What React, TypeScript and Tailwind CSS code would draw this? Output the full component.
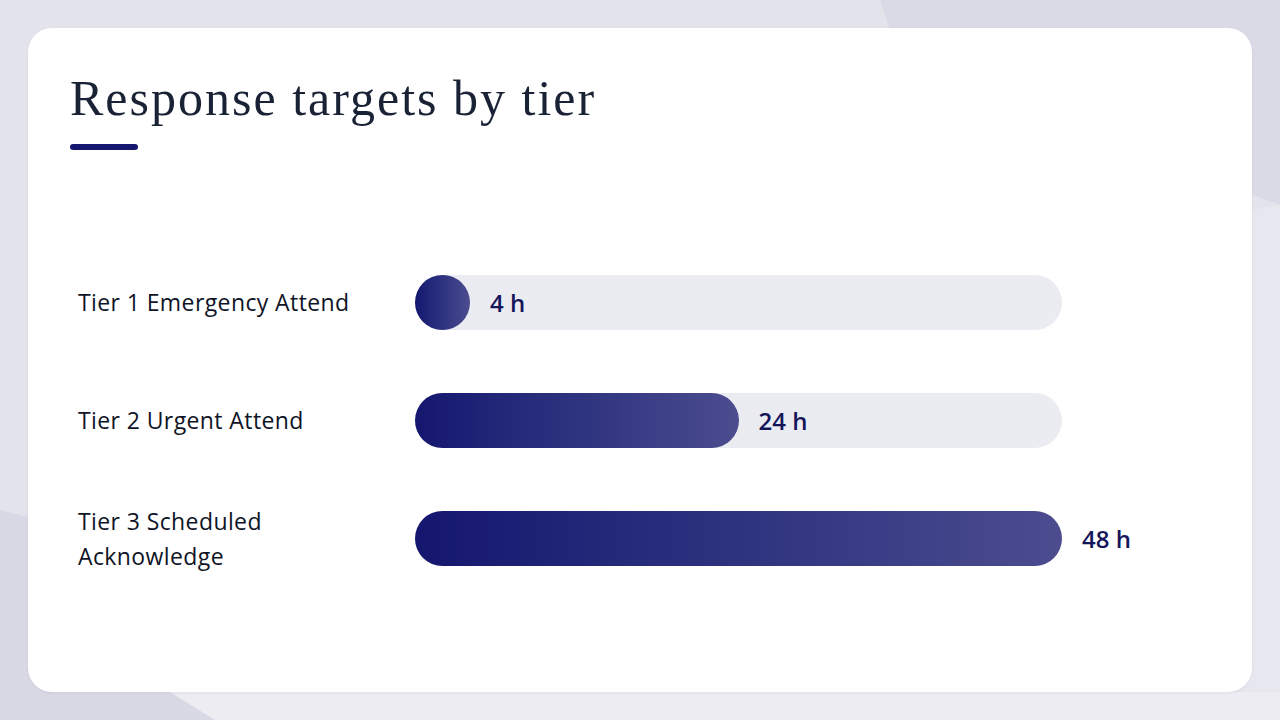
const tiers = [
  { label: "Tier 1 Emergency Attend", hours: 4 },
  { label: "Tier 2 Urgent Attend", hours: 24 },
  { label: "Tier 3 Scheduled Acknowledge", hours: 48 },
];

const MAX_HOURS = 48;
const TRACK_W = 647;
const BAR_H = 55;

function Backdrop() {
  return (
    <svg
      className="pointer-events-none absolute inset-0 h-full w-full"
      viewBox="0 0 1280 720"
      preserveAspectRatio="none"
    >
      <rect width="1280" height="720" fill="#e3e3ec" />
      <polygon points="880,0 1280,0 1280,205 900,60" fill="#dadae6" />
      <polygon points="1240,212 1280,205 1280,720 1240,720" fill="#e7e7ef" />
      <polygon points="0,510 60,525 215,720 0,720" fill="#d9d9e5" />
      <polygon points="215,720 170,692 1280,692 1280,720" fill="#ececf2" />
    </svg>
  );
}

function TierRow({ label, hours }: { label: string; hours: number }) {
  const fillW = Math.max((hours / MAX_HOURS) * TRACK_W, BAR_H);
  return (
    <div className="flex h-[55px] items-center">
      <div className="w-[337px] pr-10 text-[23px] leading-[35px] font-medium tracking-[0.4px] text-[#0f1426]">
        {label}
      </div>
      <div className="flex h-[55px] w-[647px] items-center rounded-full bg-[#ebebf2]">
        <div
          className="h-full shrink-0 rounded-full bg-gradient-to-r from-[#15166f] to-[#4c4c8f]"
          style={{ width: fillW }}
        />
        <span className="ml-5 whitespace-nowrap text-[24px] font-semibold text-[#15165a]">
          {hours} h
        </span>
      </div>
    </div>
  );
}

export default function App() {
  return (
    <div className="relative h-[720px] w-[1280px] overflow-hidden font-['Open_Sans','Noto_Sans',sans-serif]">
      <Backdrop />
      <div className="relative m-7 flex h-[664px] flex-col rounded-[24px] bg-white px-[42px] pt-[40px] shadow-[0_1px_3px_rgba(40,40,90,0.06)]">
        <h1 className="font-['Liberation_Serif','Times_New_Roman',serif] text-[50px] leading-[60px] font-normal tracking-[2px] text-[#1a2236]">
          Response targets by tier
        </h1>
        <div className="mt-[16px] h-[6px] w-[68px] rounded-full bg-[#15166f]" />
        <div className="mt-[125px] flex flex-col gap-[63px] pl-2">
          {tiers.map((t) => (
            <TierRow key={t.label} label={t.label} hours={t.hours} />
          ))}
        </div>
      </div>
    </div>
  );
}
